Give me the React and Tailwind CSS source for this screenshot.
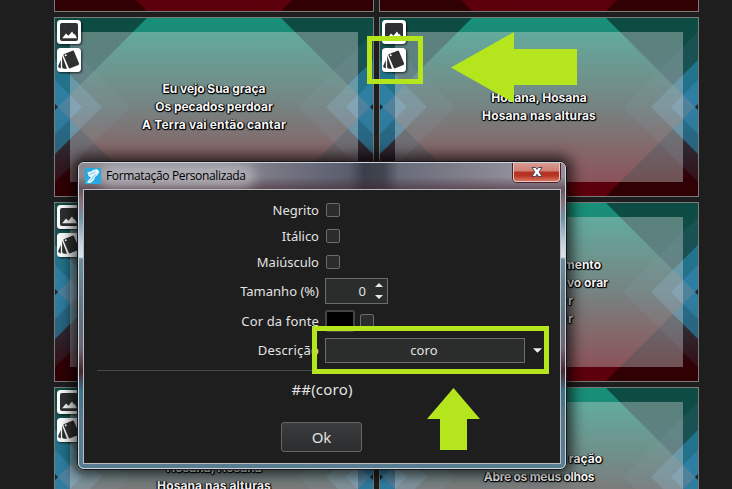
import React from "react";

function Artwork() {
  return (
    <svg className="absolute inset-0 h-full w-full" viewBox="1 1 318 178" preserveAspectRatio="none">
      <defs>
        <linearGradient id="outer" x1="0" y1="0" x2="0" y2="1">
          <stop offset="0" stopColor="#0d4c42" />
          <stop offset=".25" stopColor="#104b49" />
          <stop offset=".5" stopColor="#203a45" />
          <stop offset=".75" stopColor="#29161d" />
          <stop offset=".9" stopColor="#300005" />
          <stop offset="1" stopColor="#300004" />
        </linearGradient>
        <linearGradient id="inner" gradientUnits="userSpaceOnUse" x1="0" y1="0" x2="0" y2="180">
          <stop offset="0" stopColor="#179078" />
          <stop offset=".1" stopColor="#1b8b77" />
          <stop offset=".5" stopColor="#3a4e4c" />
          <stop offset=".72" stopColor="#4f2527" />
          <stop offset=".92" stopColor="#5b000d" />
          <stop offset="1" stopColor="#5e000b" />
        </linearGradient>
      </defs>
      <rect width="320" height="180" fill="url(#outer)" />
      <path d="M94 0H226L316 90 226 180H94L4 90Z" fill="url(#inner)" />
      <g fill="#5a8fa8" fillOpacity=".12">
        <path d="M0 14 76 90 0 166Z" />
        <path d="M320 14 244 90 320 166Z" />
      </g>
      <g fill="#5f9fc0" fillOpacity=".32">
        <path d="M0 42 48 90 0 138Z" />
        <path d="M320 42 272 90 320 138Z" />
      </g>
      <g fill="#5aa0d0" fillOpacity=".42">
        <path d="M0 62 28 90 0 118Z" />
        <path d="M320 62 292 90 320 118Z" />
      </g>
      <g fill="#0f82ac" fillOpacity=".42">
        <path d="M0 42 26 68 4 90 26 112 0 138Z" />
        <path d="M320 42 294 68 316 90 294 112 320 138Z" />
      </g>
      <path d="M0 86 4 90 0 94ZM320 86 316 90 320 94Z" fill="#16242c" />
    </svg>
  );
}

function PictureIcon() {
  return (
    <svg className="block h-6 w-6 drop-shadow-[1px_1px_1px_rgba(0,0,0,0.7)]" viewBox="0 0 24 24">
      <rect width="24" height="24" rx="3.5" fill="#fff" />
      <rect x="3" y="3" width="18" height="18" rx="2" fill="#2f3031" />
      <path d="M5.2 18.2 9 13.4 11.5 15.8 15 11.4 17 14.6 17.8 14 20 18.2Z" fill="#fff" />
    </svg>
  );
}

function CardsIcon() {
  return (
    <svg className="block h-6 w-6 drop-shadow-[1px_1px_1px_rgba(0,0,0,0.7)]" viewBox="0 0 24 24">
      <rect width="24" height="24" rx="3.5" fill="#fff" />
      <path d="M3.8 12V20.4L1.8 19.4Q.9 18.8 1.3 17.8Z" fill="#2f3031" />
      <path d="M5.1 7.5 10 20.8H7.4Q5.1 20.8 5.1 18.8Z" fill="#2f3031" />
      <path
        d="M7.2 6.1 15.4 2.7Q16.6 2.2 17.1 3.4L22 15.3Q22.5 16.5 21.3 17L13.3 20.3Q12.1 20.8 11.6 19.6L6.5 7.5Q6.1 6.6 7.2 6.1Z"
        fill="#2f3031"
      />
      <circle cx="8.7" cy="7.3" r="1" fill="#fff" />
    </svg>
  );
}

function Slide({ children, className = "" }) {
  return (
    <div className="relative h-[180px] w-[320px] overflow-hidden border border-[#7b7b7b]">
      <Artwork />
      <div className="relative h-full px-[15px] py-[14px]">
        <div
          className={
            "flex h-full flex-col justify-center bg-[#dadada]/[0.38] text-center font-['Inter','Liberation_Sans',sans-serif] text-[12px] font-bold leading-[18px] whitespace-nowrap text-[#f6f6f6] [text-shadow:1px_1px_1px_#000,-1px_0_1px_#000,0_1px_1px_#000,1px_0_1px_#000] " +
            className
          }
        >
          {children}
        </div>
      </div>
      <div className="absolute left-[2px] top-[2px] flex flex-col gap-1">
        <PictureIcon />
        <CardsIcon />
      </div>
    </div>
  );
}

function Check() {
  return <span className="block h-[14px] w-[14px] rounded-[2px] border border-[#6b6d6d] bg-[#2b2d2d]" />;
}

function Row({ label, className, labelClass = "", children }) {
  return (
    <div className={"flex items-center " + className}>
      <span className={"w-[235px] text-right " + labelClass}>{label}</span>
      <div className="ml-[6px] flex items-center">{children}</div>
    </div>
  );
}

function Dialog() {
  return (
    <div className="absolute left-[77px] top-[161px] h-[309px] w-[490px] rounded-[7px] border border-[#15171a] shadow-[0_0_14px_5px_rgba(0,0,0,0.7)]">
      <div className="relative flex h-full flex-col overflow-hidden rounded-[6px] border border-[#cdd3da] bg-[linear-gradient(180deg,#8d8c94_0px,#84808a_14px,#6a5962_27px,#85727c_40px,#6f93a6_55px,#c4d2db_80px,#d9e3ea_94px,#6c8d9e_96px,#5c7380_150px,#6f6673_185px,#4a2832_208px,#39738a_228px,#56798c_255px,#587d92_306px)]">
        <div className="absolute left-0 top-0 h-[26px] w-full bg-[linear-gradient(90deg,#8a8890_0px,#8a8890_150px,#666878_240px,#5a5d6c_270px,#3b3f4b_285px,#41454f_305px,#696c7a_320px,#85838f_400px,#9693a0_450px,#96909c_487px)]" />
        <div className="absolute left-0 top-[14px] h-[12px] w-full bg-[linear-gradient(180deg,transparent,rgba(70,35,45,0.55))]" />
        <div className="absolute left-[20px] top-[1px] h-[24px] w-[156px] rounded-full bg-[#c9c8cf] opacity-60 blur-[6px]" />
        <div className="relative flex h-[26px] items-center pl-[6px]">
          <svg className="h-4 w-4" viewBox="0 0 16 16">
            <rect width="16" height="16" fill="#25a9e0" />
            <path d="M2.5 4Q6 4.5 8 2L12 1 14.5 3.5 12.5 7 10 9 9 12 5.5 15H2L3 12.5 6 9.5 3.5 8Z" fill="#e8f6fc" />
            <path d="M4.5 6.5 10.5 4M7 9.5 11.5 6M4.5 13 8.5 9.5" fill="none" stroke="#79c8e8" strokeWidth="1" />
          </svg>
          <span className="ml-[5px] font-['Open_Sans','Noto_Sans',sans-serif] text-[12px] tracking-[-0.35px] text-black">
            Formatação Personalizada
          </span>
          <div className="absolute right-[5px] top-0 flex h-[19px] w-[47px] items-center justify-center rounded-b-[4px] border border-t-0 border-[#e7c5c1] bg-[linear-gradient(180deg,#d99a90_0%,#cf8075_45%,#b23222_50%,#b93425_70%,#d8735f_100%)] shadow-[0_0_0_1px_#4c2228]">
            <svg className="h-3 w-3" viewBox="0 0 12 12">
              <path d="M1 1.5H4.6L6 3.4 7.4 1.5H11L8.2 5.8 11 10.5H7.4L6 8.2 4.6 10.5H1L3.8 5.8Z" fill="#fff" stroke="#4a4658" />
            </svg>
          </div>
        </div>
        <div className="relative ml-[4px] h-[275px] w-[478px] border border-[#b9bcc2] bg-[#1e1e1e] font-['Noto_Sans','Open_Sans',sans-serif] text-[13px] leading-[18px] text-[#e2e2e2]">
          <Row label="Negrito" className="mt-[11px] h-[18px]"><span className="ml-px"><Check /></span></Row>
          <Row label="Itálico" className="mt-[8px] h-[18px]"><span className="ml-px"><Check /></span></Row>
          <Row label="Maiúsculo" className="mt-[8px] h-[18px]"><span className="ml-px"><Check /></span></Row>
          <Row label="Tamanho (%)" className="mt-[7px] h-[26px]">
            <div className="flex h-[26px] w-[63px] items-center justify-end border border-[#6b6d6d] bg-[#2b2d2d] pr-[4px]">
              <span className="mr-[9px]">0</span>
              <svg className="h-[18px] w-2" viewBox="0 0 8 18">
                <path d="M0 5 4 1 8 5ZM0 13 4 17 8 13Z" fill="#e8e8e8" />
              </svg>
            </div>
          </Row>
          <Row label="Cor da fonte" labelClass="tracking-[0.15px]" className="mt-[6px] h-[22px]">
            <span className="block h-[22px] w-[30px] rounded-[3px] border-2 border-[#454747] bg-black" />
            <span className="ml-[5px]"><Check /></span>
          </Row>
          <Row label="Descrição" labelClass="pb-[2px] tracking-[0.2px]" className="mt-[6px] h-[25px]">
            <div className="flex h-[25px] w-[200px] items-center justify-center border border-[#6b6d6d] bg-[#2b2d2d] pb-px pr-[2px] tracking-[0.1px]">coro</div>
            <svg className="ml-[8px] h-[5px] w-[9px]" viewBox="0 0 9 5">
              <path d="M0 .3H9L4.5 4.8Z" fill="#f0f0f0" />
            </svg>
          </Row>
          <div className="ml-[13px] mr-[11px] mt-[7px] h-px bg-[#484a4a]" />
          <div className="mt-[8px] text-center text-[15px] leading-[20px] tracking-[0.2px]">##(coro)</div>
          <button className="ml-[197px] mt-[23px] block h-[30px] w-[81px] rounded-[3px] border border-[#646667] bg-[linear-gradient(180deg,#3a3c3d,#2b2d2e)] pb-px text-[15px] leading-[26px]">
            Ok
          </button>
        </div>
      </div>
    </div>
  );
}

export default function App() {
  return (
    <div className="relative h-[489px] w-[732px] overflow-hidden bg-[#1e1e1e]">
      <div className="-mt-[168px] ml-[54px] grid w-[645px] grid-cols-2 gap-[5px]">
        <Slide />
        <Slide />
        <Slide>
          <p className="tracking-[-0.05px]">Eu vejo Sua graça</p>
          <p className="tracking-[-0.05px]">Os pecados perdoar</p>
          <p className="tracking-[0.17px]">A Terra vai então cantar</p>
        </Slide>
        <Slide>
          <p>Hosana, Hosana</p>
          <p className="tracking-[0.1px]">Hosana nas alturas</p>
        </Slide>
        <Slide />
        <Slide className="text-right">
          <p className="mr-[82px]">mento</p>
          <p className="mr-[75px]">vo orar</p>
          <p className="mr-[110px]">r</p>
          <p className="mr-[110px]">r</p>
        </Slide>
        <Slide>
          <p>Hosana, Hosana</p>
          <p className="tracking-[0.1px]">Hosana nas alturas</p>
        </Slide>
        <Slide>
          <p className="mr-[81px] text-right">ração</p>
          <p className="tracking-[-0.27px]">Abre os meus olhos</p>
          <p>&nbsp;</p>
        </Slide>
      </div>
      <Dialog />
      <div className="absolute left-[367px] top-[36px] h-[48px] w-[56px] border-[5px] border-[#b5e61d]" />
      <div className="absolute left-[312px] top-[326px] h-[48px] w-[237px] border-[5px] border-[#b5e61d]" />
      <svg className="absolute left-[451px] top-[32px] h-[71px] w-[126px]" viewBox="0 0 126 71" fill="#b5e61d">
        <path d="M0 35.5 63 0V17H126V53H63V71Z" />
      </svg>
      <svg className="absolute left-[427px] top-[388px] h-[62px] w-[53px]" viewBox="0 0 53 62" fill="#b5e61d">
        <path d="M26.5 0 53 31H40V62H13V31H0Z" />
      </svg>
    </div>
  );
}
